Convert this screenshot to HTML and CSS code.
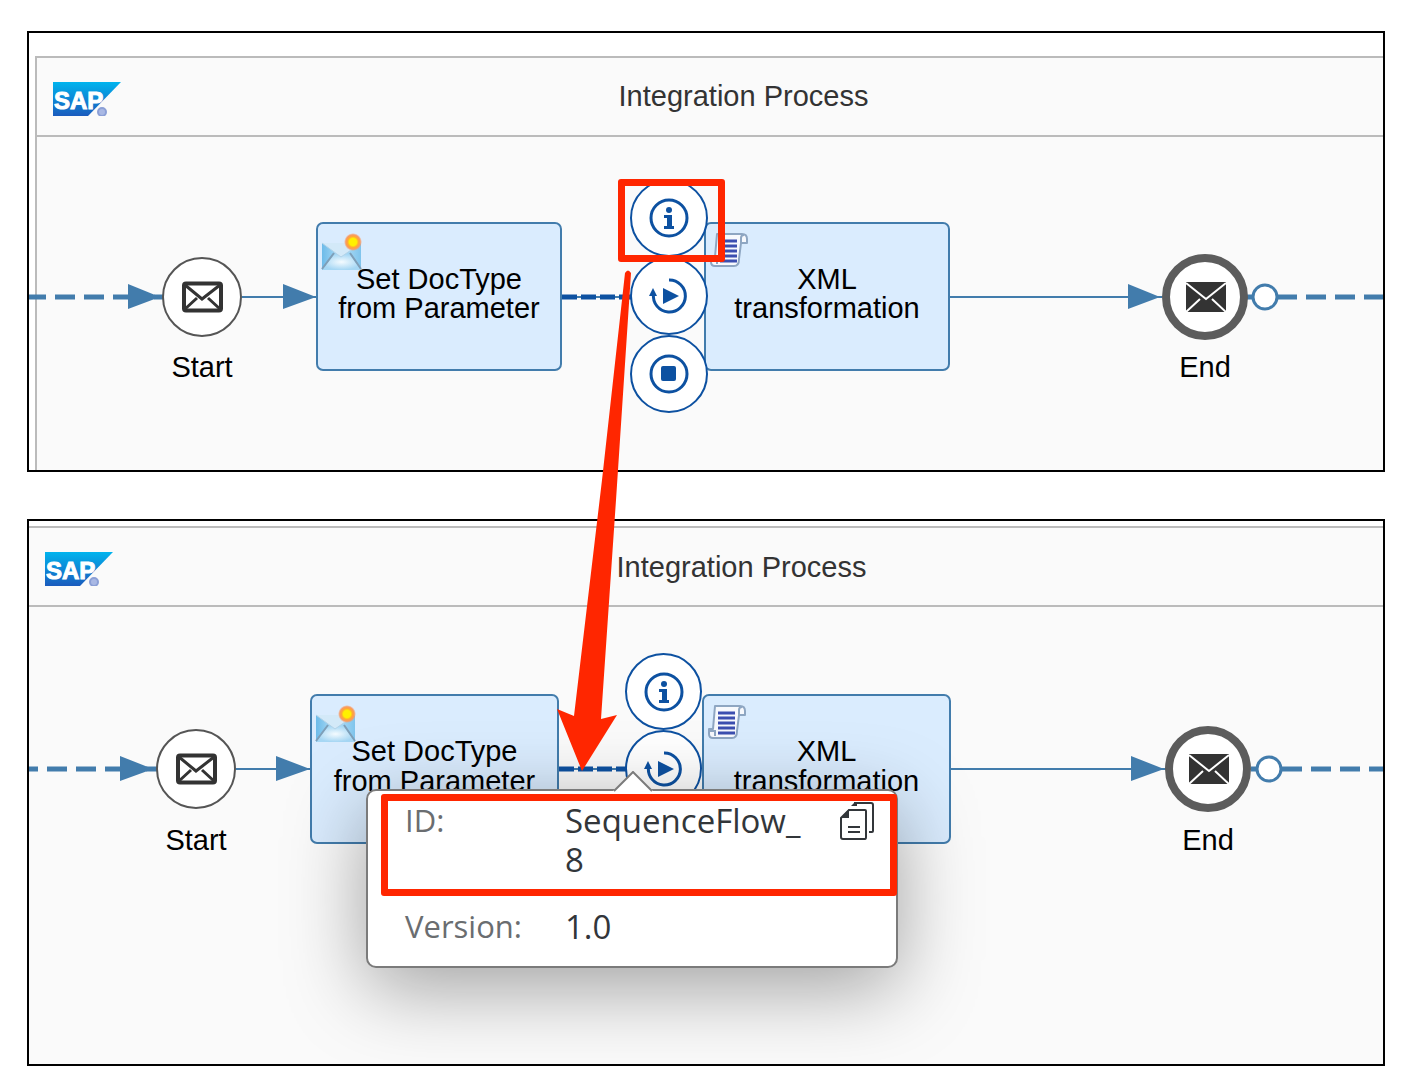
FILE: index.html
```html
<!DOCTYPE html>
<html lang="en">
<head>
<meta charset="utf-8">
<title>Integration Process</title>
<link rel="stylesheet" href="styles.css">
</head>
<body>
<svg class="defs" aria-hidden="true">
  <defs>
    <linearGradient id="sap-blue" x1="0" y1="0" x2="0" y2="1">
      <stop offset="0" stop-color="#00b4ee"/><stop offset="1" stop-color="#1a5bbd"/>
    </linearGradient>
    <linearGradient id="env-sky" x1="0" y1="0" x2="1" y2="0">
      <stop offset="0" stop-color="#6dbbe9"/><stop offset=".5" stop-color="#b5dff7"/><stop offset="1" stop-color="#7fc4ec"/>
    </linearGradient>
    <radialGradient id="env-glow">
      <stop offset="0" stop-color="#f4fbff"/><stop offset="1" stop-color="#a6d7f4"/>
    </radialGradient>
    <radialGradient id="env-sun">
      <stop offset=".4" stop-color="#fff000"/><stop offset=".6" stop-color="#ffa834"/><stop offset=".8" stop-color="#f99a62"/><stop offset="1" stop-color="#f99a62" stop-opacity="0"/>
    </radialGradient>
    <symbol id="logo" viewBox="0 0 68 34">
      <path d="M0 0H68L35 34H0Z" fill="url(#sap-blue)"/>
      <text x="1" y="27" class="logo-text">SAP</text>
      <circle cx="49" cy="30" r="4" fill="#a9b8e4" stroke="#8b9fd6" stroke-width="2"/>
    </symbol>
    <symbol id="content" viewBox="0 0 42 38">
      <path d="M1 10H40V37H1Z" fill="url(#env-sky)"/>
      <path d="M1 37L13 21H29L40 37Z" fill="url(#env-glow)"/>
      <path d="M1 10L20 24L40 10Z" fill="#d3e9f8"/>
      <path d="M1 10L20 24L40 10" fill="none" stroke="#b3d3e8" stroke-width="1"/>
      <path d="M1 36L13 20M40 36L29 20" fill="none" stroke="#7f9fb8" stroke-width="2"/>
      <circle cx="32" cy="9" r="9" fill="url(#env-sun)"/>
    </symbol>
    <symbol id="script" viewBox="0 0 38 36">
      <path d="M7 2H32Q37 2 37 7V11H31L29 27Q29 34 24 34H5Q1 34 1 30V25H5Z" fill="#f7f9fd" stroke="#8ea6c2" stroke-width="2" stroke-linejoin="round"/>
      <path d="M31 11V6Q31 3 34 3M1 27H7V32" fill="none" stroke="#8ea6c2" stroke-width="2"/>
      <path d="M10 9H27M10 14H27M10 19H27M10 24H27M10 29H27" stroke="#3c4fb0" stroke-width="3"/>
    </symbol>
    <symbol id="mail" viewBox="0 0 42 32">
      <rect x="3" y="2.500" width="37" height="27" rx="2" fill="#fff" stroke="#333" stroke-width="4"/>
      <path d="M4 4L21 18L39 4M4 28L16 17M39 28L27 17" fill="none" stroke="#333" stroke-width="3"/>
    </symbol>
    <symbol id="mail-filled" viewBox="0 0 42 32">
      <path d="M2 1H42V31H2Z" fill="#333"/>
      <path d="M2 2L22 18L42 2M2 31L16 18M42 31L28 18" fill="none" stroke="#fff" stroke-width="2"/>
    </symbol>
    <symbol id="info" viewBox="-20 -20 40 40">
      <circle r="18" fill="none" stroke="#0d51a1" stroke-width="3"/>
      <circle cy="-8" r="3" fill="#0d51a1"/>
      <path d="M-5 -3H3V8H5V11H-5V8H-2V0H-5Z" fill="#0d51a1"/>
    </symbol>
    <symbol id="run" viewBox="-20 -20 40 40">
      <path d="M0 -16A16 16 0 1 1 -15.500 -2" fill="none" stroke="#0d51a1" stroke-width="3"/>
      <path d="M-16 -8L-12 0H-20ZM-6 -8L10 0L-6 8Z" fill="#0d51a1"/>
    </symbol>
    <symbol id="stop" viewBox="-20 -20 40 40">
      <circle r="18" fill="none" stroke="#0d51a1" stroke-width="3"/>
      <rect x="-8" y="-8" width="15" height="15" rx="2" fill="#0d51a1"/>
    </symbol>
    <symbol id="copy" viewBox="0 0 36 40">
      <path d="M14 2H31Q33 2 33 4V30Q33 31 32 31H29" fill="none" stroke="#32363a" stroke-width="2"/>
      <path d="M11 5L15 1H17V5Z" fill="#32363a"/>
      <path d="M9 9H25Q26 9 26 10V36Q26 38 25 38H3Q1 38 1 36V17Z" fill="#fff" stroke="#32363a" stroke-width="2"/>
      <path d="M1 17L9 8V17ZM8 25H20V27H8ZM8 30H20V32H8Z" fill="#32363a"/>
    </symbol>
  </defs>
</svg>

<main class="page">
  <section class="panel panel-before">
    <div class="pool">
      <header class="pool-head">
        <svg class="logo" role="img" aria-label="SAP"><use href="#logo"/></svg>
        <h2 class="pool-title">Integration Process</h2>
      </header>
      <div class="canvas">
        <svg class="flows" aria-hidden="true">
          <path class="message" d="M-11 160H92"/>
          <path class="message-end" d="M117 160H126"/>
          <path class="sequence" d="M205 160H279M912 160H1125"/>
          <path class="head" d="M91 147L123 160L91 172ZM246 147L279 160L246 172ZM1091 147L1123 160L1091 172Z"/>
          <path class="traced-base" d="M525 160H594"/>
          <path class="traced" d="M525 160H594"/>
          <path class="message-end" d="M1209 160H1217"/>
          <path class="message" d="M1240 160H1360"/>
          <circle class="port" cx="1228" cy="160" r="12"/>
        </svg>
        <div class="event start"><span class="ring"><svg class="mail"><use href="#mail"/></svg></span><span>Start</span></div>
        <div class="task task-content"><svg class="content-icon"><use href="#content"/></svg><p>Set DocType<br>from Parameter</p></div>
        <div class="task task-script"><svg class="script-icon"><use href="#script"/></svg><p>XML<br>transformation</p></div>
        <div class="event end"><span class="ring"><svg class="mail"><use href="#mail-filled"/></svg></span><span>End</span></div>
        <div class="actions">
          <button type="button" aria-label="Information"><svg><use href="#info"/></svg></button>
          <button type="button" aria-label="Run simulation"><svg><use href="#run"/></svg></button>
          <button type="button" aria-label="Stop simulation"><svg><use href="#stop"/></svg></button>
        </div>
        <div class="mark mark-info"></div>
      </div>
    </div>
  </section>

  <section class="panel panel-after">
    <div class="pool">
      <header class="pool-head">
        <svg class="logo" role="img" aria-label="SAP"><use href="#logo"/></svg>
        <h2 class="pool-title">Integration Process</h2>
      </header>
      <div class="canvas">
        <svg class="flows" aria-hidden="true">
          <path class="message" d="M-11 162H92"/>
          <path class="message-end" d="M117 162H128"/>
          <path class="sequence" d="M207 162H281M922 162H1137"/>
          <path class="head" d="M91 149L124 162L91 174ZM247 149L281 162L247 174ZM1102 149L1135 162L1102 174Z"/>
          <path class="traced-base" d="M530 162H597"/>
          <path class="traced" d="M530 162H597"/>
          <path class="message-end" d="M1222 162H1229"/>
          <path class="message" d="M1253 162H1380"/>
          <circle class="port" cx="1240" cy="162" r="12"/>
        </svg>
        <div class="event start"><span class="ring"><svg class="mail"><use href="#mail"/></svg></span><span>Start</span></div>
        <div class="task task-content"><svg class="content-icon"><use href="#content"/></svg><p>Set DocType<br>from Parameter</p></div>
        <div class="task task-script"><svg class="script-icon"><use href="#script"/></svg><p>XML<br>transformation</p></div>
        <div class="event end"><span class="ring"><svg class="mail"><use href="#mail-filled"/></svg></span><span>End</span></div>
        <div class="actions">
          <button type="button" aria-label="Information"><svg><use href="#info"/></svg></button>
          <button type="button" aria-label="Run simulation"><svg><use href="#run"/></svg></button>
        </div>
        <div class="popover" role="dialog" aria-label="Sequence flow details">
          <svg class="pointer" viewBox="0 0 40 22" aria-hidden="true"><path d="M0 22V20L20 1L40 20V22Z" fill="#fff"/><path d="M1 20L20 1L39 20" fill="none" stroke="#7b7b7b" stroke-width="2"/></svg>
          <dl class="details">
            <div class="row">
              <dt>ID:</dt>
              <dd>SequenceFlow_<wbr>8</dd>
              <dd class="tool"><button type="button" class="copy" aria-label="Copy ID"><svg><use href="#copy"/></svg></button></dd>
            </div>
            <div class="row"><dt>Version:</dt><dd>1.0</dd></div>
          </dl>
          <div class="mark mark-id"></div>
        </div>
      </div>
    </div>
  </section>

  <svg class="pointer-arrow" viewBox="557 268 62 505" aria-hidden="true">
    <path d="M625 273Q628 268 631 273L616 500L601 719L617 715L582 771L557 709L574 716L602 480Z" fill="#ff2600"/>
  </svg>
</main>
</body>
</html>
```
FILE: styles.css
```css
* { box-sizing: border-box; }

body {
  margin: 0;
  background: #fff;
  color: #000;
  font-family: "Liberation Sans", Arial, sans-serif;
}

p, h2, dl, dd { margin: 0; }

svg { display: block; }

button {
  padding: 0;
  font: inherit;
  cursor: pointer;
}

.defs { position: absolute; width: 0; height: 0; }

.page {
  position: relative;
  display: flex;
  flex-direction: column;
  gap: 47px;
  padding: 31px 25px 22px 27px;
}

.panel {
  overflow: hidden;
  border: 2px solid #000;
  background: #fff;
  font-size: 29px;
}

.panel-before { padding: 23px 0 0 6px; line-height: 29px; }
.panel-after { padding-top: 5px; line-height: 30px; }

.pool {
  border-top: 2px solid #bbb;
  background: #fafafa;
}
.panel-before .pool { margin-right: -67px; border-left: 2px solid #bbb; }
.panel-after .pool { margin-right: -71px; }

.pool-head {
  display: grid;
  grid-template-columns: 1fr auto 1fr;
  align-items: center;
  height: 79px;
  padding: 0 16px;
  border-bottom: 2px solid #bbb;
}

.logo { width: 68px; height: 34px; margin-top: 5px; }

.logo-text {
  fill: #fff;
  stroke: #fff;
  stroke-width: 1px;
  font: bold 24px "Liberation Sans", Arial, sans-serif;
}

.pool-title {
  color: #333;
  font-size: inherit;
  font-weight: normal;
}

.canvas { position: relative; }
.panel-before .canvas { height: 333px; }
.panel-after .canvas { height: 457px; }

/* Connectors */
.flows {
  position: absolute;
  inset: 0;
  width: 100%;
  height: 100%;
  overflow: visible;
}
.flows path { fill: none; stroke: #427cac; }
.flows .message { stroke-width: 5; stroke-dasharray: 20 9; }
.flows .message-end { stroke-width: 5; }
.flows .sequence { stroke-width: 2; }
.flows .head { fill: #427cac; stroke: none; }
.flows .traced-base { stroke-width: 2; }
.flows .traced { stroke: #0d51a1; stroke-width: 5; stroke-dasharray: 15 4; }
.flows .port { fill: #fff; stroke: #427cac; stroke-width: 3; }

/* Diagram nodes */
.event {
  position: absolute;
  display: flex;
  flex-direction: column;
  align-items: center;
}
.ring {
  display: grid;
  place-items: center;
  border-radius: 50%;
  background: #fff;
}
.start { gap: 16px; }
.start .ring { width: 80px; height: 80px; border: 2px solid #555; }
.end { gap: 13px; }
.end .ring { width: 86px; height: 86px; border: 8px solid #5c5c5c; }
.mail { width: 42px; height: 32px; }

.task {
  position: absolute;
  display: flex;
  align-items: center;
  justify-content: center;
  padding-bottom: 6px;
  border: 2px solid #427cac;
  border-radius: 7px;
  background: #daecfe;
  text-align: center;
}
.content-icon, .script-icon { position: absolute; }
.content-icon { top: 9px; left: 3px; width: 42px; height: 38px; }
.script-icon { top: 8px; left: 4px; width: 38px; height: 36px; }

.panel-before .task { top: 85px; width: 246px; height: 149px; }
.panel-before .task-content { left: 279px; }
.panel-before .task-script { left: 667px; }
.panel-before .start { top: 120px; left: 125px; }
.panel-before .end { top: 117px; left: 1125px; }

.panel-after .task { top: 87px; width: 249px; height: 150px; }
.panel-after .task-content { left: 281px; }
.panel-after .task-script { left: 673px; }
.panel-after .start { top: 122px; left: 127px; }
.panel-after .end { top: 119px; left: 1136px; }

.actions {
  position: absolute;
  display: flex;
  flex-direction: column;
}
.actions button {
  display: grid;
  place-items: center;
  width: 78px;
  height: 78px;
  border: 2px solid #0d51a1;
  border-radius: 50%;
  background: #fff;
}
.actions svg { width: 40px; height: 40px; }
.panel-before .actions { top: 42px; left: 593px; }
.panel-after .actions { top: 46px; left: 596px; }
.panel-after .actions button { width: 77px; height: 77px; }

/* Details popover */
.popover {
  position: absolute;
  top: 182px;
  left: 337px;
  width: 532px;
  border: 2px solid #7b7b7b;
  border-radius: 10px;
  background: #fff;
  box-shadow: 0 20px 80px rgba(0, 0, 0, .36);
  font-family: "Open Sans", "Noto Sans", sans-serif;
}
.pointer {
  position: absolute;
  top: -20px;
  left: 245px;
  width: 40px;
  height: 22px;
}
.details {
  display: flex;
  flex-direction: column;
  gap: 28px;
  padding: 10px 20px 20px 37px;
  font-size: 33px;
  line-height: 39px;
}
.row { display: grid; grid-template-columns: 160px 244px 1fr; }
.row dt { color: #6a6d70; font-size: 31px; }
.row dd { color: #32363a; }
.tool { justify-self: end; }
.copy { display: block; border: 0; background: none; }
.copy svg { width: 36px; height: 40px; }

/* Highlights */
.mark {
  position: absolute;
  border: 7px solid #ff2600;
  border-radius: 3px;
  pointer-events: none;
}
.mark-info { top: 42px; left: 581px; width: 107px; height: 83px; }
.mark-id { top: 3px; left: 13px; width: 516px; height: 102px; }

.pointer-arrow {
  position: absolute;
  top: 268px;
  left: 557px;
  width: 62px;
  height: 505px;
  overflow: visible;
  pointer-events: none;
}
```
